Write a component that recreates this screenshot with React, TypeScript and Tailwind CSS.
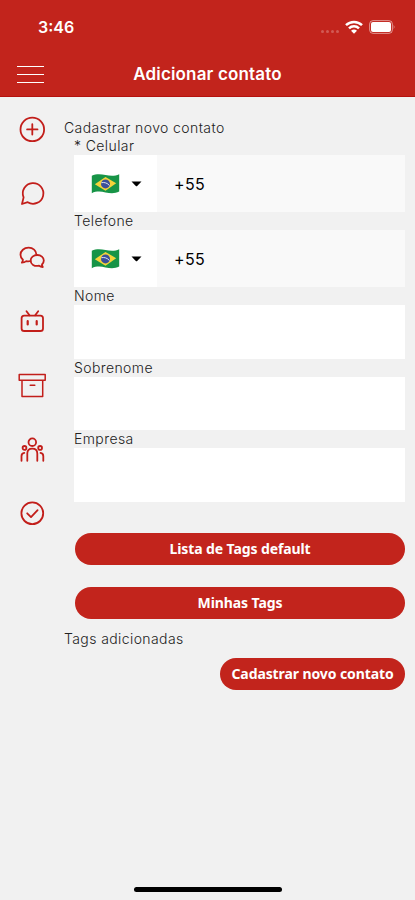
import type { ReactNode } from "react";

function SideIcon({ children }: { children: ReactNode }) {
  return (
    <svg
      width="28"
      height="28"
      viewBox="0 0 28 28"
      fill="none"
      stroke="#c21e1a"
      strokeWidth="1.8"
      strokeLinecap="round"
      strokeLinejoin="round"
    >
      {children}
    </svg>
  );
}

function Sidebar() {
  return (
    <nav className="flex w-16 shrink-0 flex-col items-center gap-9 pt-[18px]">
      {/* add */}
      <SideIcon>
        <circle cx="14.3" cy="14.4" r="11.8" />
        <path d="M14.3 9.2v10.4M9.1 14.4h10.4" />
      </SideIcon>
      {/* chat */}
      <SideIcon>
        <path d="M5.6 18.4A10.3 10.3 0 1 1 9.7 23.2L4 25z" />
      </SideIcon>
      {/* group chat */}
      <SideIcon>
        <path d="M18.4 11.5C18.3 7.5 15 4.700 10.600 4.700C6 4.700 2.500 7.700 2.500 11.700c0 2 .9 3.800 2.400 5.100 0 1.200-.5 2-1 2.900 1.700-.1 3.100-.6 4.400-1.600 1.300.3 2.800.3 4.300-.1" />
        <path d="M19.300 12c3.700 0 6.500 2.400 6.500 5.500 0 1.600-.7 2.900-1.800 4 0 1 .3 1.700.8 2.500-1.400-.1-2.600-.5-3.700-1.300-4.800 1-8.500-1.400-8.500-5.200 0-3.100 3-5.500 6.700-5.500z" />
      </SideIcon>
      {/* bot */}
      <SideIcon>
        <rect x="3.6" y="8.6" width="21.4" height="15.4" rx="2.6" />
        <path d="M8.5 4.200l3 4M20.200 4.200l-3 4" />
        <path d="M9.700 14.200v3.200M18.700 14.200v3.200" strokeWidth="2.2" />
      </SideIcon>
      {/* archive */}
      <SideIcon>
        <path d="M1.2 3.500h26v5.700h-26zM4 9.200v16.200h20.700V9.200" strokeWidth="1.5" />
        <path d="M12.2 14.200h4.600" strokeWidth="1.5" />
      </SideIcon>
      {/* team */}
      <SideIcon>
        <circle cx="14.3" cy="7.200" r="3.8" />
        <path d="M9.300 25.800v-7.400c0-3 2.100-4.800 5-4.800s5 1.800 5 4.800v7.400" />
        <circle cx="6.5" cy="12.900" r="1.900" />
        <circle cx="22.1" cy="12.900" r="1.900" />
        <path d="M3.500 25.800v-4.600c0-1.800 1-3 2.800-3.300M25.300 25.800v-4.600c0-1.800-1-3-2.800-3.300" />
      </SideIcon>
      {/* done */}
      <SideIcon>
        <circle cx="14.3" cy="14.3" r="10.9" />
        <path d="M9.2 14.300l3.800 3.800 6.600-7" />
      </SideIcon>
    </nav>
  );
}

function BrazilFlag() {
  return (
    <svg width="29" height="22" viewBox="0 0 29 22">
      <path
        d="M.8 2.8C5 .7 9.6.9 14.5 2S24 3.3 28.2 1.3V18.6C24 20.7 19.5 20.5 14.5 19.4S5 18.200.8 20.2z"
        fill="#179447"
      />
      <path d="M3.8 11.3L14.5 3.9l10.7 6.3-10.7 7.6z" fill="#f4d33a" />
      <circle cx="14.5" cy="10.9" r="4.5" fill="#3b4f9a" />
      <path d="M10.4 9.7c3-.7 6 .3 8.1 2.9" stroke="#dce4f2" strokeWidth="1" fill="none" />
    </svg>
  );
}

function Label({ children }: { children: ReactNode }) {
  return (
    <div className="h-[18px] text-sm leading-[18px] font-light tracking-[0.4px] whitespace-pre text-[#222]">
      {children}
    </div>
  );
}

function PhoneField({ label }: { label: string }) {
  return (
    <div>
      <Label>{label}</Label>
      <div className="flex h-[57px] bg-[#f9f9f9]">
        <div className="flex w-[83px] items-center bg-white pl-[17px]">
          <BrazilFlag />
          <svg className="ml-[11px]" width="11" height="6" viewBox="0 0 11 6">
            <path d="M.5.5h10L6.2 4.9q-.7.7-1.4 0z" fill="#000" />
          </svg>
        </div>
        <span className="flex items-center pl-[17px] text-base tracking-[0.4px] text-black">+55</span>
      </div>
    </div>
  );
}

function TextField({ label }: { label: string }) {
  return (
    <div>
      <Label>{label}</Label>
      <div className="h-[53.5px] bg-white" />
    </div>
  );
}

function Header() {
  return (
    <header className="h-[97px] border-b border-[#b5120e] bg-[#c2241c] text-white">
      <div className="flex h-[54px] items-center justify-between pr-[19px] pl-[38px]">
        <span className="text-base font-semibold">3:46</span>
        <div className="flex items-center">
          <div className="mt-2 mr-1.5 flex gap-[2px]">
            <i className="size-[3px] rounded-full bg-white/25" />
            <i className="size-[3px] rounded-full bg-white/25" />
            <i className="size-[3px] rounded-full bg-white/25" />
            <i className="size-[3px] rounded-full bg-white/25" />
          </div>
          <svg width="18" height="14" viewBox="0 0 18 14" fill="none" stroke="#fff" strokeWidth="2.5">
            <path d="M1 5.2a11.5 11.5 0 0 1 16 0M4 8.3a7.2 7.2 0 0 1 10 0" />
            <path d="M6 10.8a4.4 4.4 0 0 1 6 0l-3 3z" fill="#fff" stroke="none" />
          </svg>
          <svg className="ml-1.5" width="27" height="14" viewBox="0 0 27 14">
            <rect x=".6" y=".6" width="22.8" height="12.8" rx="3.5" fill="none" stroke="#fff" strokeOpacity=".5" />
            <rect x="2" y="2" width="20" height="10" rx="2" fill="#fff" />
            <path d="M24.7 4.8q1.8 2.2 0 4.4z" fill="#fff" fillOpacity=".5" />
          </svg>
        </div>
      </div>
      <div className="grid h-10 grid-cols-[44px_1fr_44px] items-center">
        <div className="flex flex-col gap-[7px] pl-[17px]">
          <div className="h-px w-[27px] bg-white" />
          <div className="h-px w-[27px] bg-white" />
          <div className="h-px w-[27px] bg-white" />
        </div>
        <h1 className="pt-0.5 text-center text-[17px] font-semibold tracking-[0.15px]">Adicionar contato</h1>
      </div>
    </header>
  );
}

const pill =
  "flex items-center justify-center rounded-full bg-[#c2241c] font-['Noto_Sans',sans-serif] text-sm font-bold tracking-[-0.1px] text-white";

export default function App() {
  return (
    <div className="flex h-[900px] w-[415px] flex-col overflow-hidden bg-[#f1f1f1] font-['Inter',sans-serif]">
      <Header />
      <div className="flex flex-1">
        <Sidebar />
        <main className="flex flex-1 flex-col pt-[22px] pr-[10px]">
          <Label>Cadastrar novo contato</Label>
          <div className="ml-[10px]">
            <PhoneField label="* Celular" />
            <PhoneField label="Telefone" />
            <TextField label="Nome" />
            <TextField label="Sobrenome" />
            <TextField label="Empresa" />
          </div>
          <div className="mt-[31.5px] ml-[11px] flex flex-col gap-[22px]">
            <button className={`${pill} h-8`}>Lista de Tags default</button>
            <button className={`${pill} h-8`}>Minhas Tags</button>
          </div>
          <div className="mt-[11px]">
            <Label>Tags adicionadas</Label>
          </div>
          <button className={`${pill} mt-[10px] h-8 w-[185px] self-end`}>Cadastrar novo contato</button>
        </main>
      </div>
      <div className="mb-2 flex justify-center">
        <div className="h-[5px] w-[148px] rounded-full bg-black" />
      </div>
    </div>
  );
}
